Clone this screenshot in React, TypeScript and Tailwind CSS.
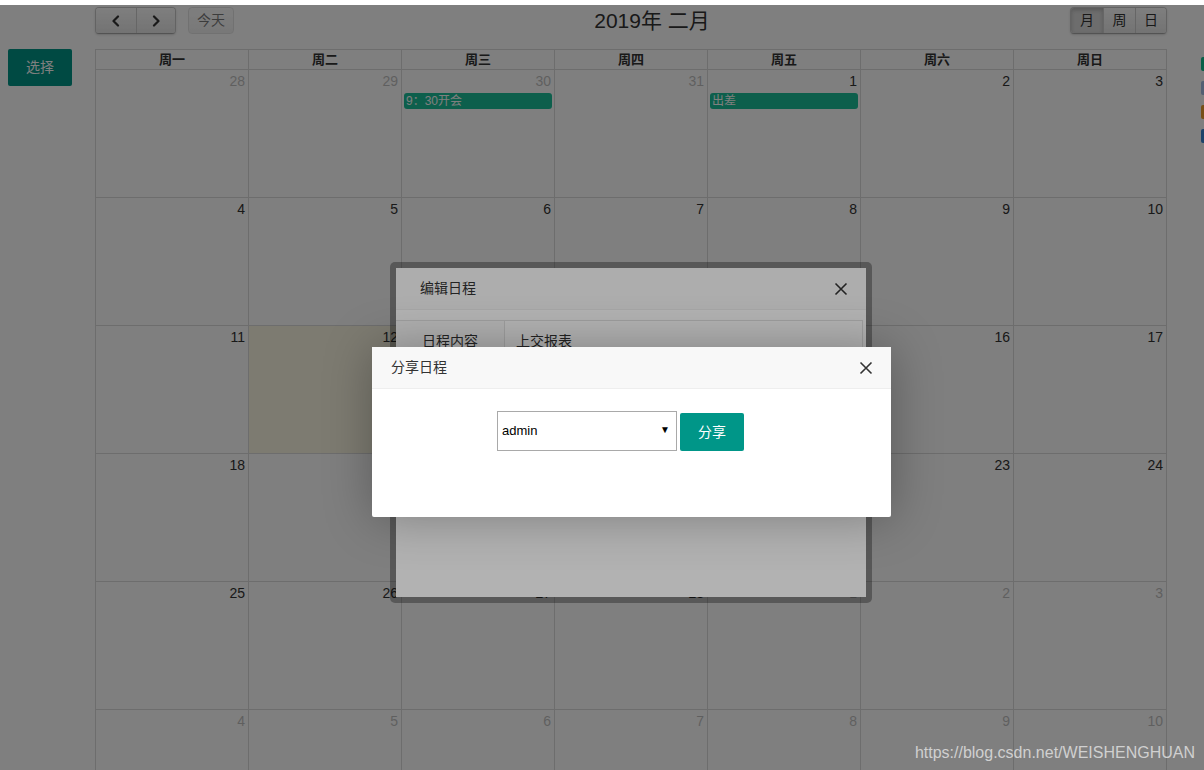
import React from "react";

const FONT = '"Liberation Sans", "Noto Sans CJK SC", sans-serif';

type Day = { n: number; other?: boolean; today?: boolean; event?: string };

const weeks: Day[][] = [
  [
    { n: 28, other: true },
    { n: 29, other: true },
    { n: 30, other: true, event: "9：30开会" },
    { n: 31, other: true },
    { n: 1, event: "出差" },
    { n: 2 },
    { n: 3 },
  ],
  [4, 5, 6, 7, 8, 9, 10].map((n) => ({ n })),
  [11, 12, 13, 14, 15, 16, 17].map((n) => ({ n, today: n === 12 })),
  [18, 19, 20, 21, 22, 23, 24].map((n) => ({ n })),
  [
    { n: 25 },
    { n: 26 },
    { n: 27 },
    { n: 28 },
    { n: 1, other: true },
    { n: 2, other: true },
    { n: 3, other: true },
  ],
  [4, 5, 6, 7, 8, 9, 10].map((n) => ({ n, other: true })),
];

const weekdays = ["周一", "周二", "周三", "周四", "周五", "周六", "周日"];

function Chevron({ dir }: { dir: "left" | "right" }) {
  return (
    <svg width="10" height="12" viewBox="0 0 10 12" fill="none">
      <polyline
        points={dir === "left" ? "7,1.5 2.5,6 7,10.5" : "3,1.5 7.5,6 3,10.5"}
        stroke="#333"
        strokeWidth="2.2"
        strokeLinecap="round"
        strokeLinejoin="round"
      />
    </svg>
  );
}

function CloseIcon() {
  return (
    <svg width="14" height="14" viewBox="0 0 14 14">
      <path d="M1.5 1.5 L12.5 12.5 M12.5 1.5 L1.5 12.5" stroke="#333" strokeWidth="1.6" />
    </svg>
  );
}

function Toolbar() {
  return (
    <div className="flex h-[27px] items-center justify-between">
      <div className="flex items-center gap-[12px]">
        <div className="flex h-[27px] overflow-hidden rounded-[4px] border border-[#c8c8c8] border-b-[#a8a8a8] shadow-[0_1px_2px_rgba(0,0,0,0.15)]">
          <button className="flex w-[40px] items-center justify-center bg-gradient-to-b from-white to-[#e8e8e8]">
            <Chevron dir="left" />
          </button>
          <button className="flex w-[39px] items-center justify-center border-l border-[#cfcfcf] bg-gradient-to-b from-white to-[#e8e8e8]">
            <Chevron dir="right" />
          </button>
        </div>
        <button className="h-[27px] w-[46px] rounded-[4px] border border-[#d8d8d8] bg-gradient-to-b from-white to-[#ececec] text-[14px] text-[#333] opacity-65">
          今天
        </button>
      </div>
      <h2 className="text-[21px] leading-none text-[#333]">2019年 二月</h2>
      <div className="flex h-[27px] overflow-hidden rounded-[4px] border border-[#c8c8c8] border-b-[#a8a8a8] text-[14px] text-[#333] shadow-[0_1px_2px_rgba(0,0,0,0.15)]">
        <button className="w-[32px] bg-[#dcdcdc] shadow-[inset_0_2px_4px_rgba(0,0,0,0.2)]">月</button>
        <button className="w-[32px] border-l border-[#cfcfcf] bg-gradient-to-b from-white to-[#e8e8e8]">周</button>
        <button className="w-[31px] border-l border-[#cfcfcf] bg-gradient-to-b from-white to-[#e8e8e8]">日</button>
      </div>
    </div>
  );
}

function MonthGrid() {
  return (
    <div className="border-l border-t border-[#ddd]">
      <div className="grid grid-cols-7">
        {weekdays.map((w) => (
          <div
            key={w}
            className="h-[20px] border-b border-r border-[#ddd] text-center text-[13px] font-bold leading-[19px] text-[#333]"
          >
            {w}
          </div>
        ))}
      </div>
      {weeks.map((week, i) => (
        <div key={i} className="grid grid-cols-7">
          {week.map((d, j) => (
            <div
              key={j}
              className={`h-[128px] border-b border-r border-[#ddd] ${d.today ? "bg-[#fcf8e3]" : ""}`}
            >
              <div
                className={`pr-[3px] pt-[3px] text-right text-[14px] leading-[16px] ${
                  d.other ? "text-[#333] opacity-30" : "text-[#333]"
                }`}
              >
                {d.n}
              </div>
              {d.event && (
                <div className="mx-[2px] mt-[4px] h-[16px] rounded-[3px] bg-[#1cc09a] pl-[2px] text-[12px] leading-[16px] text-white">
                  {d.event}
                </div>
              )}
            </div>
          ))}
        </div>
      ))}
    </div>
  );
}

export default function App() {
  return (
    <div
      className="relative h-[770px] w-[1204px] overflow-hidden bg-white"
      style={{ fontFamily: FONT }}
    >
      {/* page */}
      <div className="flex pt-[7px]">
        <div className="w-[95px] shrink-0 pl-[8px] pt-[42px]">
          <button className="h-[37px] w-[64px] rounded-[2px] bg-[#009688] text-[14px] text-white">
            选择
          </button>
        </div>
        <div className="w-[1072px] shrink-0">
          <Toolbar />
          <div className="mt-[15px]">
            <MonthGrid />
          </div>
        </div>
        <div className="ml-[34px] flex shrink-0 flex-col gap-[10px] pt-[50px]">
          <div className="h-[14px] w-[12px] rounded-[2px] bg-[#15c08f]" />
          <div className="h-[14px] w-[12px] rounded-[2px] bg-[#a7c0e8]" />
          <div className="h-[14px] w-[12px] rounded-[2px] bg-[#f0a030]" />
          <div className="h-[14px] w-[12px] rounded-[2px] bg-[#3a86d6]" />
        </div>
      </div>

      {/* first shade */}
      <div className="absolute inset-x-0 bottom-0 top-[5px] bg-black/[0.286]" />

      {/* edit dialog */}
      <div className="absolute left-[390px] top-[262px] h-[341px] w-[482px] rounded-[5px] border-[6px] border-black/30 bg-white bg-clip-padding">
        <div className="flex h-[42px] items-center justify-between border-b border-[#eee] bg-[#f8f8f8] pl-[24px] pr-[18px] text-[14px] text-[#333]">
          <span>编辑日程</span>
          <CloseIcon />
        </div>
        <div className="mr-[3px] mt-[10px] flex h-[40px] border border-l-0 border-[#e2e2e2] text-[14px] text-[#333]">
          <div className="flex w-[109px] items-center justify-center border-r border-[#e2e2e2] bg-[#fbfbfb] pt-[3px]">
            日程内容
          </div>
          <div className="flex items-center pl-[11px] pt-[3px]">上交报表</div>
        </div>
      </div>

      {/* second shade */}
      <div className="absolute inset-x-0 bottom-0 top-[5px] bg-black/30" />

      {/* share dialog */}
      <div className="absolute left-[372px] top-[347px] h-[170px] w-[519px] rounded-[2px] bg-white shadow-[1px_1px_50px_rgba(0,0,0,0.3)]">
        <div className="flex h-[42px] items-center justify-between border-b border-[#eee] bg-[#f8f8f8] pl-[19px] pr-[18px] text-[14px] text-[#333]">
          <span>分享日程</span>
          <CloseIcon />
        </div>
        <div className="flex items-end gap-[3px] pl-[125px] pt-[22px]">
          <div className="relative flex h-[40px] w-[180px] items-center border border-[#a9a9a9] bg-white pl-[4px] text-[13px] text-black">
            admin
            <span className="absolute right-[6px] top-[13px] text-[10px] leading-none">▼</span>
          </div>
          <button className="h-[38px] w-[64px] rounded-[2px] bg-[#009688] text-[14px] text-white">
            分享
          </button>
        </div>
      </div>

      {/* watermark */}
      <div className="absolute bottom-[9px] right-[9px] text-[16px] leading-none text-[#d0d0d0]">
        https://blog.csdn.net/WEISHENGHUAN
      </div>
    </div>
  );
}
